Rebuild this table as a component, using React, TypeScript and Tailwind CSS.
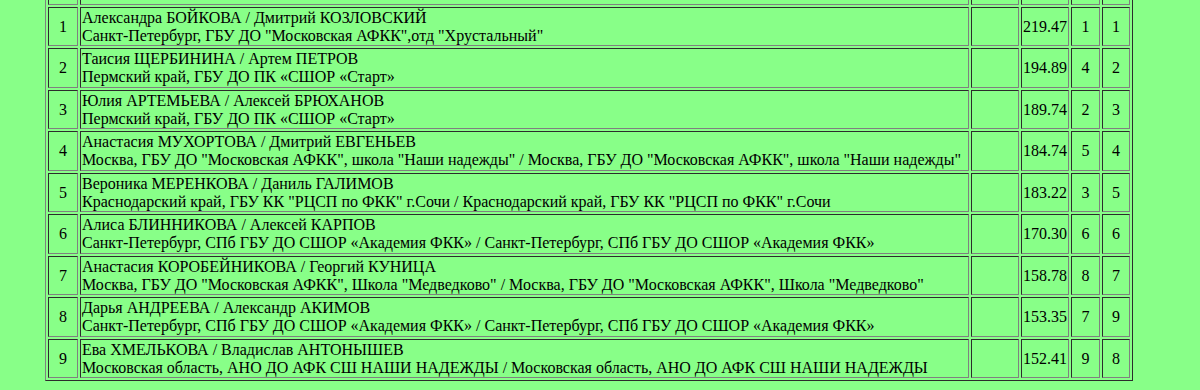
import React from "react";

const rows: [string, string, string, string, string, string][] = [
  ["1", "Александра БОЙКОВА / Дмитрий КОЗЛОВСКИЙ", "Санкт-Петербург, ГБУ ДО \"Московская АФКК\",отд \"Хрустальный\"", "219.47", "1", "1"],
  ["2", "Таисия ЩЕРБИНИНА / Артем ПЕТРОВ", "Пермский край, ГБУ ДО ПК «СШОР «Старт»", "194.89", "4", "2"],
  ["3", "Юлия АРТЕМЬЕВА / Алексей БРЮХАНОВ", "Пермский край, ГБУ ДО ПК «СШОР «Старт»", "189.74", "2", "3"],
  ["4", "Анастасия МУХОРТОВА / Дмитрий ЕВГЕНЬЕВ", "Москва, ГБУ ДО \"Московская АФКК\", школа \"Наши надежды\" / Москва, ГБУ ДО \"Московская АФКК\", школа \"Наши надежды\"", "184.74", "5", "4"],
  ["5", "Вероника МЕРЕНКОВА / Даниль ГАЛИМОВ", "Краснодарский край, ГБУ КК \"РЦСП по ФКК\" г.Сочи / Краснодарский край, ГБУ КК \"РЦСП по ФКК\" г.Сочи", "183.22", "3", "5"],
  ["6", "Алиса БЛИННИКОВА / Алексей КАРПОВ", "Санкт-Петербург, СПб ГБУ ДО СШОР «Академия ФКК» / Санкт-Петербург, СПб ГБУ ДО СШОР «Академия ФКК»", "170.30", "6", "6"],
  ["7", "Анастасия КОРОБЕЙНИКОВА / Георгий КУНИЦА", "Москва, ГБУ ДО \"Московская АФКК\", Школа \"Медведково\" / Москва, ГБУ ДО \"Московская АФКК\", Школа \"Медведково\"", "158.78", "8", "7"],
  ["8", "Дарья АНДРЕЕВА / Александр АКИМОВ", "Санкт-Петербург, СПб ГБУ ДО СШОР «Академия ФКК» / Санкт-Петербург, СПб ГБУ ДО СШОР «Академия ФКК»", "153.35", "7", "9"],
  ["9", "Ева ХМЕЛЬКОВА / Владислав АНТОНЫШЕВ", "Московская область, АНО ДО АФК СШ НАШИ НАДЕЖДЫ / Московская область, АНО ДО АФК СШ НАШИ НАДЕЖДЫ", "152.41", "9", "8"],
];

const cell = "border border-[#808080] [border-style:inset] p-[1px] align-middle";

export default function App() {
  return (
    <div className="h-[390px] w-[1200px] overflow-hidden bg-[#88ff88] text-black font-['Liberation_Serif','Times_New_Roman',serif] text-[16px] leading-[17.75px]">
      <table className="ml-[45px] -mt-[20px] border-separate border-spacing-[2px] border border-[#808080] [border-style:outset]">
        <tbody>
          <tr>
            <td className={`${cell} w-[30px]`}>&nbsp;</td>
            <td className={`${cell} w-[889px]`}>&nbsp;</td>
            <td className={`${cell} w-[48px]`}>&nbsp;</td>
            <td className={`${cell} w-[46px]`}>&nbsp;</td>
            <td className={cell}>&nbsp;</td>
            <td className={cell}>&nbsp;</td>
          </tr>
          {rows.map((r) => (
            <tr key={r[0]}>
              <td className={`${cell} text-center`}>{r[0]}</td>
              <td className={`${cell} text-left`}>
                {r[1]}
                <br />
                {r[2]}
              </td>
              <td className={cell}></td>
              <td className={`${cell} text-center`}>{r[3]}</td>
              <td className={`${cell} text-center w-[29px]`}>{r[4]}</td>
              <td className={`${cell} text-center w-[28px]`}>{r[5]}</td>
            </tr>
          ))}
        </tbody>
      </table>
    </div>
  );
}
